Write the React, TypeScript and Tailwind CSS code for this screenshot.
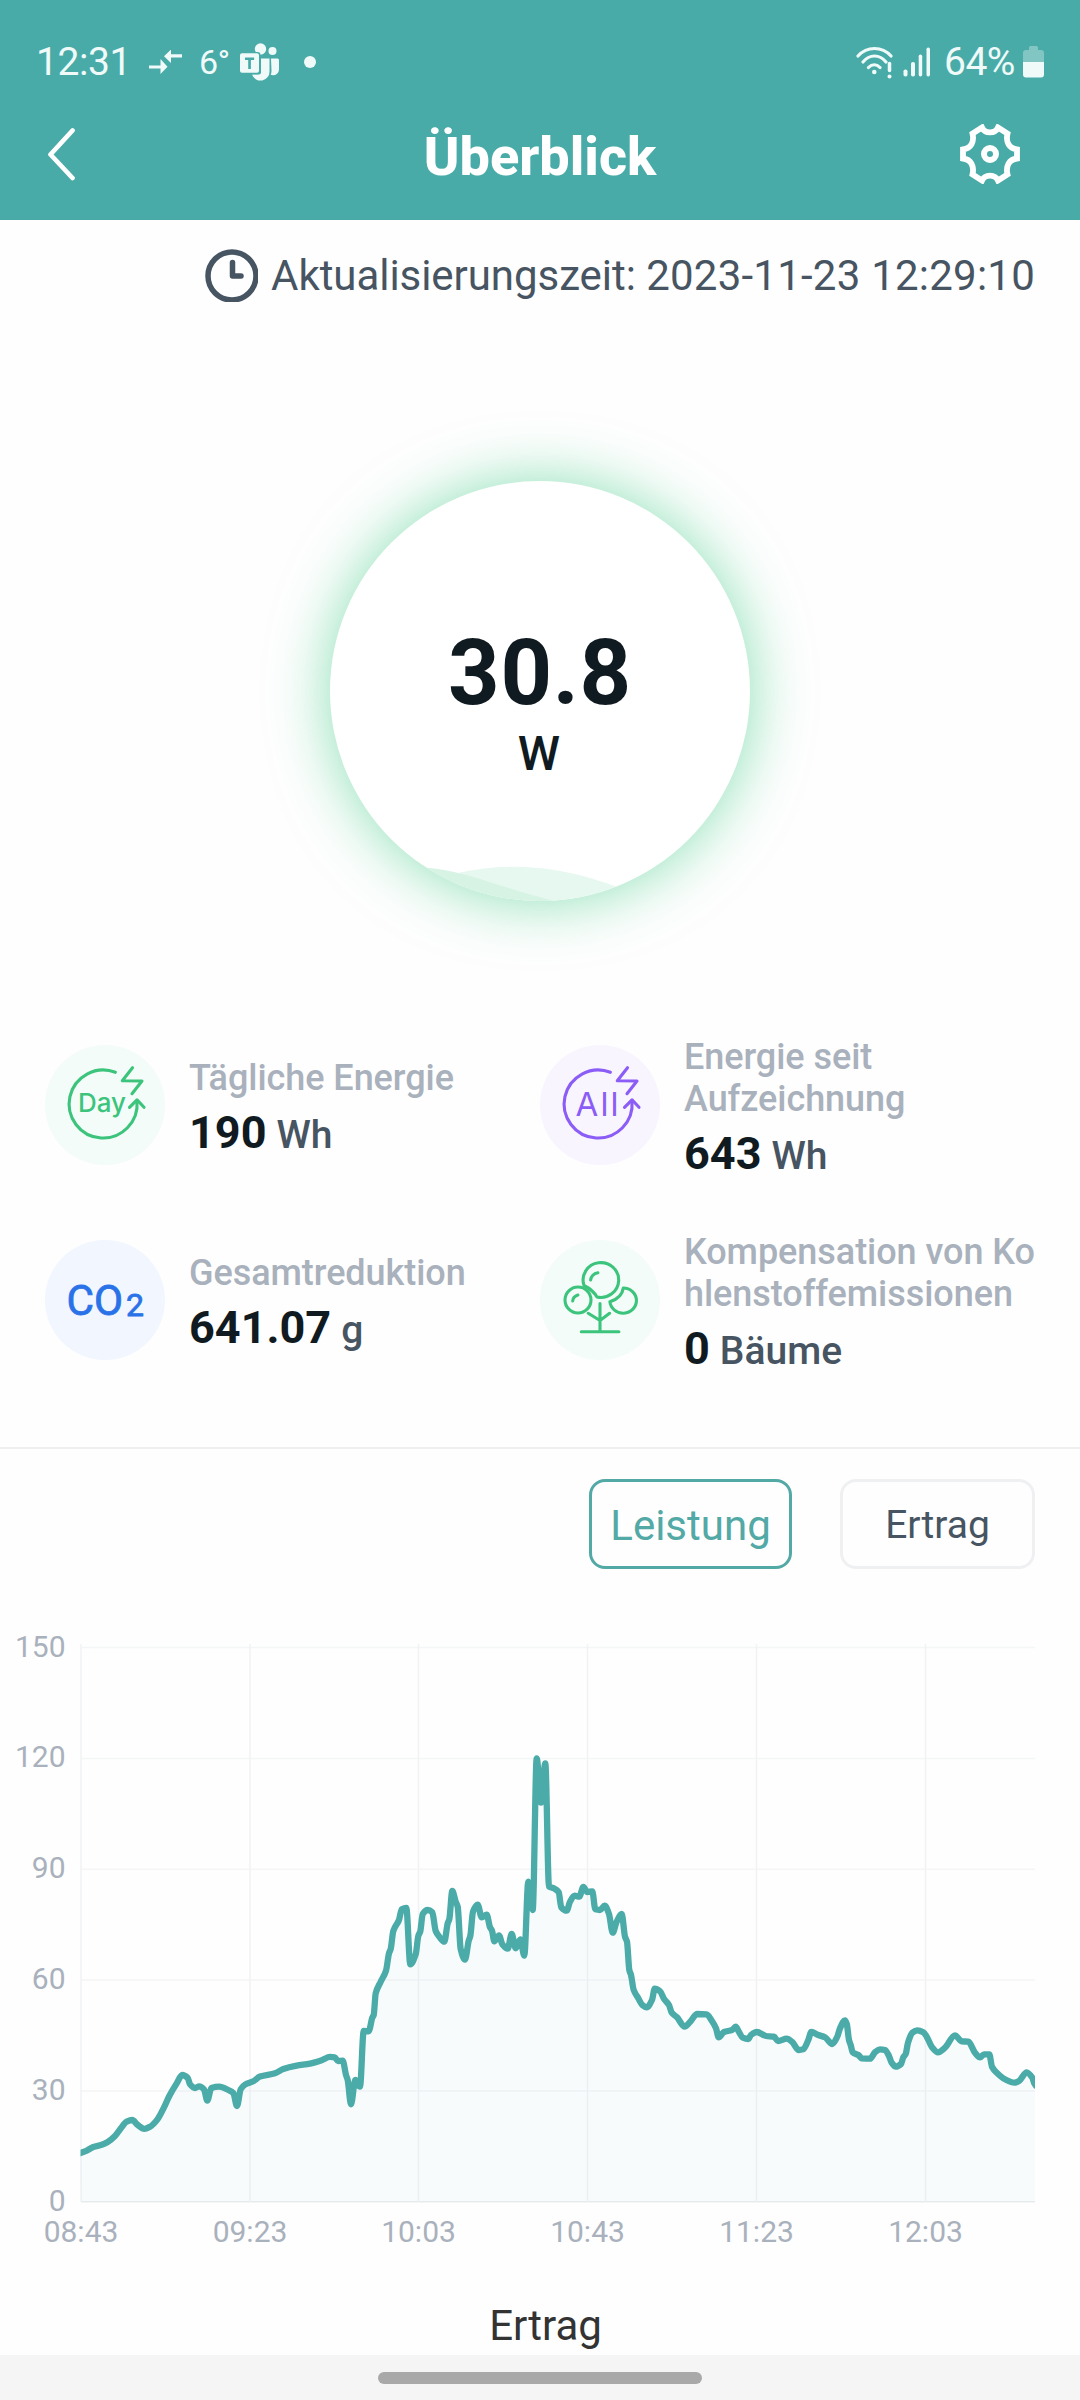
import React from "react";

type Point = [number, number];

// Power curve in chart coordinates; the chart starts at page y = 1569.
const CHART_TOP = 1569;
const CURVE: Point[] = [
  [79, 2153.5], [87.3, 2150.3], [93.3, 2147], [101.7, 2144.8], [107.3, 2142.3], [115, 2136], [120.7, 2128.4],
  [126.7, 2121.7], [132.3, 2120], [137.3, 2124.6], [144.3, 2128.8], [150, 2126.7], [157.3, 2119.6], [164, 2107.4],
  [169.3, 2096], [176.7, 2083.4], [182.3, 2075], [187.7, 2077.9], [190, 2084.2], [195, 2088], [199.3, 2086.3],
  [204, 2089.3], [207.3, 2100.6], [211.3, 2088], [219.3, 2086.7], [228.3, 2090], [233.3, 2093], [237, 2106],
  [240.7, 2089.3], [245, 2084.6], [253.3, 2081.3], [260, 2076.6], [275, 2073.3], [283.3, 2069], [296.7, 2065.7],
  [310, 2063.6], [321.7, 2060.2], [330, 2056.9], [334.7, 2057.3], [338, 2061], [342.7, 2060.7], [346, 2075],
  [347.7, 2080], [351, 2104.3], [355.3, 2080], [360, 2086.7], [363.7, 2031], [368.7, 2031.3], [372.3, 2017.7],
  [373.7, 2015], [375.7, 1993.3], [380.7, 1981.7], [386, 1970.7], [389, 1953.3], [390.7, 1949], [393.3, 1931],
  [399, 1920], [401.7, 1909.3], [406.3, 1908], [410.3, 1964.3], [415.7, 1954.3], [418.3, 1936], [420.3, 1931.3],
  [422.7, 1914], [427.7, 1910], [432.3, 1912.3], [435.7, 1931], [439.3, 1936.7], [444.3, 1941.7], [447.7, 1923.3],
  [449.3, 1919.3], [452.3, 1891], [455.7, 1901.7], [457.7, 1906.7], [460.7, 1949.3], [465, 1959.7], [468.7, 1940.7],
  [470.3, 1936], [473, 1911.7], [477.7, 1904.7], [481.7, 1917.3], [486.7, 1914.7], [490, 1927.3], [492, 1930.7],
  [494.3, 1941.3], [499, 1935.3], [502.3, 1944.3], [507.7, 1948.7], [511.7, 1934], [515.7, 1948.3], [520.3, 1939.3],
  [524.3, 1955.7], [528.3, 1881.7], [532.7, 1910], [536.7, 1758.3], [541, 1802.7], [545.3, 1763.3], [549, 1886.7],
  [554, 1888.3], [558.7, 1892.3], [561.3, 1907.3], [566.7, 1910.7], [570, 1901.7], [574.7, 1895.7], [579.3, 1896.7],
  [583.3, 1887], [587.3, 1892], [592.3, 1891.3], [595.3, 1909.3], [600, 1910], [604.7, 1905.7], [609, 1914],
  [612.7, 1932.7], [616.7, 1921.7], [621.7, 1914], [625, 1936.7], [627, 1941.7], [629.3, 1970], [631, 1975],
  [633.7, 1990], [638.3, 1998.3], [642.3, 2005], [646.7, 2007.3], [652, 2000], [654.7, 1988.7], [660, 1991.3],
  [664.3, 1999.3], [669, 2005], [671.7, 2012.7], [677, 2017.3], [684.7, 2026.7], [690, 2022], [697.3, 2014],
  [706.7, 2014.3], [711.3, 2020], [716, 2028.3], [718.7, 2037.3], [724, 2032], [732, 2030], [735.7, 2026.7],
  [739, 2032], [742.7, 2037.7], [748.3, 2039], [751, 2035], [756.7, 2032], [766, 2036], [774, 2036.7], [778, 2041],
  [786.7, 2038.7], [792.3, 2042], [798.7, 2050], [803.3, 2049.3], [808.3, 2040], [811.3, 2032], [818.3, 2035],
  [825, 2037.3], [832.3, 2044], [837.3, 2036.7], [840, 2028.3], [845, 2020.3], [846.8, 2024], [849, 2040],
  [850.7, 2045], [852.7, 2052.3], [858.3, 2055], [861.7, 2058.3], [870, 2058.7], [875, 2052.3], [880, 2049.3],
  [885, 2050], [889, 2056], [891.7, 2062.7], [895.7, 2066.7], [901, 2064], [903.3, 2057.3], [905.7, 2054],
  [908, 2042.7], [912.3, 2032.7], [917.3, 2030.3], [923.3, 2032.3], [926.7, 2036.7], [931.7, 2046.7], [938, 2052.3],
  [945, 2047.7], [955, 2035.3], [961.7, 2041.3], [968.3, 2041.7], [975, 2052.7], [980, 2057.3], [984, 2054.3],
  [989.3, 2054.3], [992, 2066.7], [997.3, 2073.3], [1005, 2079.3], [1014.3, 2082.7], [1019, 2081], [1026.7, 2072.3],
  [1032.3, 2077.7], [1034.3, 2083.3], [1037, 2087],
];

// Monotone cubic interpolation, so the line never overshoots its samples.
function smoothPath(points: Point[]): string {
  const n = points.length;
  const slope = (i: number) => (points[i + 1][1] - points[i][1]) / (points[i + 1][0] - points[i][0]);
  const tangents = points.map((_, i) => {
    if (i === 0) return slope(0);
    if (i === n - 1) return slope(n - 2);
    const a = slope(i - 1);
    const b = slope(i);
    return a * b <= 0 ? 0 : (2 * a * b) / (a + b);
  });
  let d = `M${points[0][0]} ${points[0][1]}`;
  for (let i = 0; i < n - 1; i++) {
    const [x0, y0] = points[i];
    const [x1, y1] = points[i + 1];
    const h = (x1 - x0) / 3;
    d += `C${(x0 + h).toFixed(2)} ${(y0 + tangents[i] * h).toFixed(2)} ${(x1 - h).toFixed(2)} ${(y1 - tangents[i + 1] * h).toFixed(2)} ${x1} ${y1}`;
  }
  return d;
}

const LINE = smoothPath(CURVE.map(([x, y]) => [x, +(y - CHART_TOP).toFixed(1)] as Point));

const Y_TICKS = [
  { label: "150", y: 78.5 },
  { label: "120", y: 189.4 },
  { label: "90", y: 300.2 },
  { label: "60", y: 411.1 },
  { label: "30", y: 521.9 },
  { label: "0", y: 632.7 },
];

const X_TICKS = [
  { label: "08:43", x: 81 },
  { label: "09:23", x: 250 },
  { label: "10:03", x: 418.5 },
  { label: "10:43", x: 587.5 },
  { label: "11:23", x: 756.5 },
  { label: "12:03", x: 925.5 },
];

function StatusBar() {
  return (
    <div className="mt-9 flex h-[52px] items-center pl-9 pr-9 text-[#effaf9]">
      <span className="w-[113px] text-[39px] leading-[52px] tracking-[-0.4px]">12:31</span>
      <svg width="34" height="24" viewBox="0 0 34 24" fill="currentColor">
        <path d="M0 15.500h11.500V9L18.500 16.800L11.500 24v-5.500H0zM33 4.300H22V-0.500L15 6.300l7 6.700V7.500H33z" />
      </svg>
      <span className="ml-4 w-[34px] text-[34px] leading-[52px] tracking-[-0.5px]">6°</span>
      <svg className="ml-[7px]" width="40" height="38" viewBox="0 0 40 38" fill="currentColor">
        <circle cx="20.500" cy="6" r="5.700" />
        <circle cx="32.500" cy="8" r="4" />
        <path d="M21 15.500h8.500v12.500a9 9 0 0 1-17.500 3.500h7a2 2 0 0 0 2-2z" />
        <path d="M31 15.500h6.500a1.500 1.500 0 0 1 1.500 1.500v9a6 6 0 0 1-8.300 5.800q.8-1.900.8-4z" />
        <rect x="-1" y="9" width="21.500" height="22.200" rx="3" fill="#49aba8" />
        <path fillRule="evenodd" d="M2 10.300h15a2 2 0 0 1 2 2v15.500a2 2 0 0 1-2 2H2a2 2 0 0 1-2-2V12.300a2 2 0 0 1 2-2zm3 4.200v2.500h3.200v9h2.700v-9h3.200v-2.500z" />
      </svg>
      <span className="ml-6 h-3 w-3 rounded-full bg-current" />
      <span className="flex-1" />
      <svg width="37" height="34" viewBox="0 0 37 34" fill="none" stroke="currentColor" strokeWidth="3.200" strokeLinecap="round">
        <path d="M2 11C11 1 26 1 35 11M7 17C13.500 9 23.500 9 30 17M12.500 22.500c3.500-3.700 8-3.700 11.500 0" />
        <circle cx="18.300" cy="27" r="2.300" fill="currentColor" stroke="none" />
        <path d="M33.500 18.500v7" strokeWidth="3.500" />
        <circle cx="33.500" cy="31.500" r="2" fill="currentColor" stroke="none" />
      </svg>
      <svg className="ml-2.5" width="28" height="30" viewBox="0 0 28 30" fill="currentColor">
        <rect x="0.500" y="22.500" width="4" height="7" rx="1.800" />
        <rect x="8" y="15" width="4" height="14.500" rx="1.800" />
        <rect x="15.700" y="7.500" width="3.500" height="22" rx="1.700" />
        <rect x="23.500" y="0.500" width="3.500" height="29" rx="1.700" />
      </svg>
      <span className="ml-[13px] w-[74px] text-[39px] leading-[52px] tracking-[-0.500px]">64%</span>
      <svg className="ml-[5px]" width="21" height="32" viewBox="0 0 21 32" fill="currentColor">
        <path d="M6 1.500Q6 0 7.500 0h6Q15 0 15 1.500V4h3q3 0 3 3v9H0V7q0-3 3-3h3z" opacity="0.350" />
        <path d="M0 16h21v12.500q0 3-3 3H3q-3 0-3-3z" />
      </svg>
    </div>
  );
}

function Header() {
  return (
    <header className="flex h-[220px] flex-col bg-[#49aba8]">
      <StatusBar />
      <div className="flex flex-1 items-center justify-between pl-[47px] pr-[60px] text-white">
        <svg width="73" height="54" viewBox="0 0 73 54" fill="none" stroke="currentColor" strokeWidth="4.700" strokeLinecap="round" strokeLinejoin="round">
          <path d="M25.500 3.500L3.500 27.500L25.500 51" />
        </svg>
        <h1 className="pt-[5px] text-[54px] font-extrabold leading-[60px]">Überblick</h1>
        <svg width="60" height="60" viewBox="0 0 60 60" fill="none" stroke="currentColor" strokeWidth="5.800">
          <path d="M22 3.500C25 10 35 10 38 3.500L47.500 9.500C45.500 18 49 24.500 57 25.500V34.500C49 35.500 45.500 42 47.500 50.500L38 56.500C35 50 25 50 22 56.500L12.500 50.500C14.500 42 11 35.500 3 34.500V25.500C11 24.500 14.500 18 12.500 9.500Z" />
          <circle cx="30" cy="30" r="6" strokeWidth="6" />
        </svg>
      </div>
    </header>
  );
}

function UpdateTime() {
  return (
    <div className="flex h-[111px] items-center justify-end gap-[13px] pr-[45px] text-[#475462]">
      <svg width="53" height="53" viewBox="0 0 53 53" fill="none" stroke="currentColor" strokeWidth="5.500">
        <circle cx="27" cy="27" r="24" />
        <path d="M27.500 13.500V27H36" strokeLinecap="round" strokeLinejoin="round" />
      </svg>
      <p className="whitespace-nowrap text-[42px] leading-[50px]">
        <span className="tracking-[-0.05px]">Aktualisierungszeit: </span>
        <span className="tracking-[0.23px]">2023-11-23 12:29:10</span>
      </p>
    </div>
  );
}

function PowerGauge() {
  return (
    <div className="relative mx-auto mt-[150px] flex h-[420px] w-[420px] shrink-0 flex-col items-center rounded-full bg-white text-[#101a21] shadow-[0_0_60px_rgba(60,204,131,0.6)]">
      <svg className="absolute inset-0" width="420" height="420" viewBox="0 0 420 420">
        <clipPath id="gauge">
          <circle cx="210" cy="210" r="210" />
        </clipPath>
        <g clipPath="url(#gauge)">
          <path d="M110 398L130 391.500C175 382 225 382 290 407V420H110Z" fill="#e7f8f0" />
          <path d="M80 386C130 386 160 404 224 420V425H80Z" fill="#d6f3e4" />
        </g>
      </svg>
      <div className="mt-[148px] text-[90px] font-bold leading-[90px] tracking-[0.7px]">30.8</div>
      <div className="mt-[6px] pr-[2px] text-5xl font-medium leading-[58px]">W</div>
    </div>
  );
}

function CycleMark() {
  return (
    <>
      <path d="M70.400 27.300A34 34 0 1 0 92 56" />
      <path d="M84.500 62.300L92 54.800L99 62.300" />
      <path d="M87.500 22.700L77.300 35.700L97 36L87 48.700" />
    </>
  );
}

const ICON_STROKE = { fill: "none", strokeWidth: 3.1, strokeLinecap: "round", strokeLinejoin: "round" } as const;

function DayIcon() {
  return (
    <svg width="120" height="120" viewBox="0 0 120 120">
      <g {...ICON_STROKE} stroke="#3cc47c">
        <CycleMark />
      </g>
      <text x="33" y="66.700" fontFamily="Inter" fontSize="26" fontWeight="500" fill="#3cc47c" textLength="48" lengthAdjust="spacingAndGlyphs">
        Day
      </text>
    </svg>
  );
}

function AllIcon() {
  return (
    <svg width="120" height="120" viewBox="0 0 120 120">
      <g {...ICON_STROKE} stroke="#8b5cf6">
        <CycleMark />
      </g>
      <text x="35.500" y="70.700" fontFamily="Inter" fontSize="33" fontWeight="400" fill="#8b5cf6" textLength="43">
        All
      </text>
    </svg>
  );
}

function Co2Icon() {
  return (
    <svg width="120" height="120" viewBox="0 0 120 120" fill="#2a72e8" stroke="#2a72e8" strokeWidth="0.800">
      <text x="21.500" y="75.300" fontFamily="Roboto" fontSize="42" textLength="56.500" lengthAdjust="spacingAndGlyphs">
        CO
      </text>
      <text x="81" y="75.500" fontFamily="Roboto" fontSize="32">
        2
      </text>
    </svg>
  );
}

function TreeIcon() {
  return (
    <svg width="120" height="120" viewBox="0 0 120 120" {...ICON_STROKE} stroke="#3cc47c">
      <path d="M44 45.500A17.800 17.400 0 1 1 57 57Q53 50 44 45.500Z" />
      <path d="M50.600 40Q51.500 34 57.900 32.700" />
      <circle cx="38" cy="60" r="13" />
      <path d="M32.700 61Q33 56.500 37.900 55" />
      <path d="M83.300 48A13.300 12.600 0 1 1 69.900 61.700Q82 58 83.300 48Z" />
      <path d="M60 63.500V91.700M48.200 73.300L60 80.500L69.600 73.300M41.300 91.700H78.900" />
    </svg>
  );
}

interface StatProps {
  icon: React.ReactNode;
  tint: string;
  label: React.ReactNode;
  value: string;
  unit: string;
}

function Stat({ icon, tint, label, value, unit }: StatProps) {
  return (
    <div className="flex h-[140px] items-center gap-6">
      <div className={`h-[120px] w-[120px] shrink-0 rounded-full ${tint}`}>{icon}</div>
      <div className="flex flex-col whitespace-nowrap pt-1">
        <div className="text-4xl font-medium leading-[42px] tracking-[-0.05px] text-[#a9b1bc]">{label}</div>
        <div className="mt-[11px] flex items-baseline gap-2.5 leading-[46px]">
          <span className="text-[45px] font-bold text-[#101a21]">{value}</span>
          <span className="text-[39px] font-medium text-[#475462]">{unit}</span>
        </div>
      </div>
    </div>
  );
}

function Stats() {
  return (
    <div className="mt-[134px] grid grid-cols-[495px_495px] gap-y-[55px] pl-[45px]">
      <Stat icon={<DayIcon />} tint="bg-[#f3fcf8]" label="Tägliche Energie" value="190" unit="Wh" />
      <Stat icon={<AllIcon />} tint="bg-[#f8f5ff]" label={<>Energie seit<br />Aufzeichnung</>} value="643" unit="Wh" />
      <Stat icon={<Co2Icon />} tint="bg-[#f1f6ff]" label="Gesamtreduktion" value="641.07" unit="g" />
      <Stat icon={<TreeIcon />} tint="bg-[#f3fcf8]" label={<>Kompensation von Ko<br />hlenstoffemissionen</>} value="0" unit="Bäume" />
    </div>
  );
}

function ChartTabs() {
  return (
    <div className="mt-[30px] flex h-[90px] shrink-0 justify-end gap-12 pr-[45px]">
      <button className="w-[203px] rounded-2xl border-[3px] border-[#52a9a5] pt-[3px] text-[42px] leading-[81px] text-[#52a9a5]">Leistung</button>
      <button className="w-[195px] rounded-2xl border-[3px] border-[#eff0f2] pt-[3px] text-[39px] leading-[81px] text-[#475462]">Ertrag</button>
    </div>
  );
}

function PowerChart() {
  return (
    <svg className="shrink-0" width="1080" height="726" viewBox="0 0 1080 726" fontFamily="Roboto" fontSize="30" fill="#a9b1bc">
      <clipPath id="plot">
        <rect x="80.500" y="70" width="954.500" height="563" />
      </clipPath>
      {Y_TICKS.map((t) => (
        <g key={t.label}>
          <path d={`M81 ${t.y}H1035`} stroke={t.label === "0" ? "#e9edee" : "#f4f5f6"} strokeWidth="1.500" />
          <text x="65.500" y={t.y + 9} textAnchor="end">{t.label}</text>
        </g>
      ))}
      {X_TICKS.map((t) => (
        <g key={t.label}>
          <path d={`M${t.x} 75V633`} stroke="#f1f2f4" strokeWidth="1.500" />
          <text x={t.x} y="673" textAnchor="middle">{t.label}</text>
        </g>
      ))}
      <g clipPath="url(#plot)">
        <path d={`${LINE}V632.700H81Z`} fill="#49b4c4" fillOpacity="0.036" />
        <path d={LINE} fill="none" stroke="#4aaba8" strokeWidth="6.300" strokeLinejoin="round" />
      </g>
    </svg>
  );
}

export default function App() {
  return (
    <div className="flex h-[2400px] w-[1080px] flex-col overflow-hidden bg-[#fefefe] font-[Roboto,sans-serif]">
      <Header />
      <UpdateTime />
      <PowerGauge />
      <Stats />
      <div className="mt-[77px] h-0.5 shrink-0 bg-[#eeeff0]" />
      <ChartTabs />
      <PowerChart />
      <div className="h-[60px] shrink-0 pl-[11px] pt-[2px] text-center text-[42px] leading-[58px] text-[#333333]">Ertrag</div>
      <div className="flex h-[45px] shrink-0 items-start justify-center bg-[#f5f5f5] pt-[17px]">
        <div className="h-3 w-[324px] rounded-full bg-[#a9a9a9]" />
      </div>
    </div>
  );
}
